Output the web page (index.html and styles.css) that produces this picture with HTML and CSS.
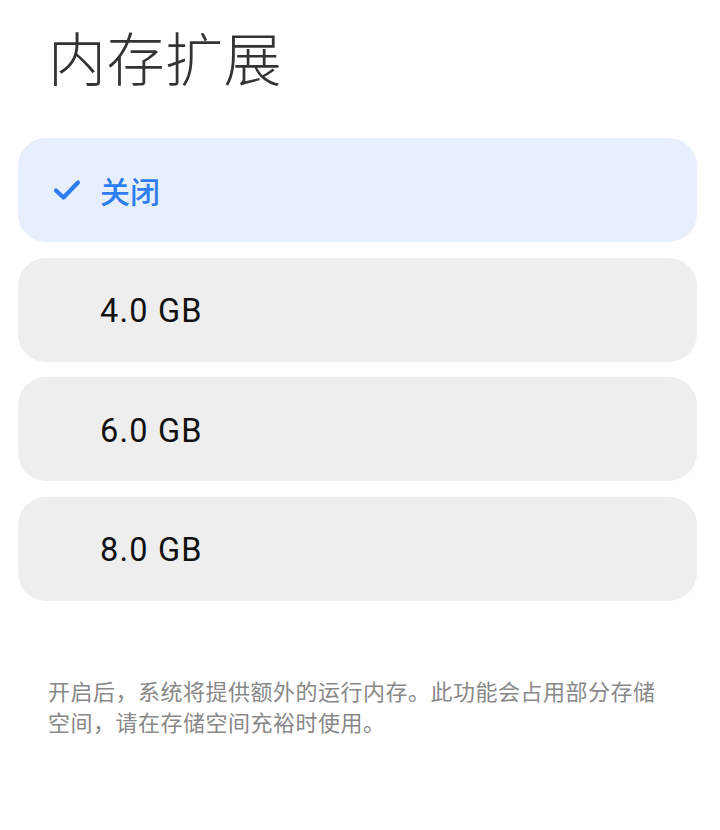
FILE: index.html
```html
<!DOCTYPE html>
<html>
<head>
  <title>内存扩展</title>
  <link rel="stylesheet" href="styles.css">
</head>
<body>
  <div class="page">
    <h1 class="title">内存扩展</h1>

    <div class="options">
      <div class="option selected">
        <span class="check">
          <svg width="30" height="24" viewBox="0 0 30 24"><path d="M4 12.5 L11.5 19.5 L26 4.5" fill="none" stroke="#2f7df2" stroke-width="4.2" stroke-linecap="round" stroke-linejoin="round"/></svg>
        </span>
        <span class="label">关闭</span>
      </div>
      <div class="option">
        <span class="check"></span>
        <span class="label">4.0 GB</span>
      </div>
      <div class="option">
        <span class="check"></span>
        <span class="label">6.0 GB</span>
      </div>
      <div class="option">
        <span class="check"></span>
        <span class="label">8.0 GB</span>
      </div>
    </div>

    <p class="note">开启后，系统将提供额外的运行内存。此功能会占用部分存储空间，请在存储空间充裕时使用。</p>
  </div>
</body>
</html>
```

FILE: styles.css
```css
body {
  margin: 0;
  background: #fff;
  font-family: Roboto, "Noto Sans CJK SC", sans-serif;
}

.page {
  padding: 0 23px 0 18px;
}

.title {
  margin: 0;
  padding: 18px 0 0 30px;
  height: 116px;
  box-sizing: border-box;
  font-family: "Noto Sans CJK SC", sans-serif;
  font-weight: 300;
  font-size: 58px;
  line-height: 76px;
  letter-spacing: 0.5px;
  color: #333;
}

.options {
  display: flex;
  flex-direction: column;
  gap: 15.5px;
  margin-top: 22px;
}

.option {
  display: flex;
  align-items: center;
  height: 104px;
  border-radius: 28px;
  background: #eeeeee;
  padding-left: 34px;
}

.option.selected {
  background: #e7effc;
}

.check {
  display: flex;
  width: 48px;
}

.label {
  padding-top: 3px;
  font-size: 32.5px;
  letter-spacing: 1.2px;
  color: #111;
}

.selected .label {
  padding-top: 0;
  font-family: "Noto Sans CJK SC", sans-serif;
  font-size: 30px;
  font-weight: 500;
  letter-spacing: 0;
  color: #2f7df2;
}

.note {
  margin: 74px 0 0 30px;
  max-width: 616px;
  font-family: "Noto Sans CJK SC", sans-serif;
  font-size: 22px;
  line-height: 31px;
  letter-spacing: 0.5px;
  color: #888;
}
```
